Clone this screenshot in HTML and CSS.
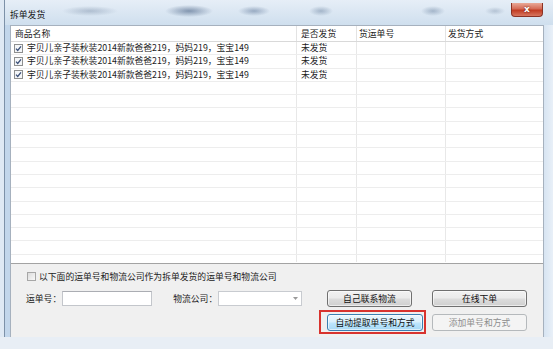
FILE: index.html
```html
<!DOCTYPE html>
<html lang="zh-CN">
<head>
    <meta charset="UTF-8">
    <meta name="viewport" content="width=device-width, initial-scale=1.0">
    <title>拆单发货</title>
    <link rel="stylesheet" href="styles.css">
</head>
<body>

<div class="window">
    <div class="titlebar">
        <span class="title">拆单发货</span>
        <span class="close">x</span>
    </div>

    <div class="frame">
        <div class="client">
            <div class="grid">
                <div class="row head">
                    <div>商品名称</div><div>是否发货</div><div>货运单号</div><div>发货方式</div>
                </div>
                <div class="rows">
                    <div class="row">
                        <div class="name"><svg class="tick" width="9" height="9" viewBox="0 0 9 9"><rect x="0.5" y="0.5" width="8" height="8" fill="#f4f6f8" stroke="#8e8f8f"/><path d="M2 4.6 L3.7 6.4 L7 2.3" fill="none" stroke="#3a4f78" stroke-width="1.3"/></svg>宇贝儿亲子装秋装2014新款爸爸219，妈妈219，宝宝149</div>
                        <div>未发货</div><div></div><div></div>
                    </div>
                    <div class="row">
                        <div class="name"><svg class="tick" width="9" height="9" viewBox="0 0 9 9"><rect x="0.5" y="0.5" width="8" height="8" fill="#f4f6f8" stroke="#8e8f8f"/><path d="M2 4.6 L3.7 6.4 L7 2.3" fill="none" stroke="#3a4f78" stroke-width="1.3"/></svg>宇贝儿亲子装秋装2014新款爸爸219，妈妈219，宝宝149</div>
                        <div>未发货</div><div></div><div></div>
                    </div>
                    <div class="row">
                        <div class="name"><svg class="tick" width="9" height="9" viewBox="0 0 9 9"><rect x="0.5" y="0.5" width="8" height="8" fill="#f4f6f8" stroke="#8e8f8f"/><path d="M2 4.6 L3.7 6.4 L7 2.3" fill="none" stroke="#3a4f78" stroke-width="1.3"/></svg>宇贝儿亲子装秋装2014新款爸爸219，妈妈219，宝宝149</div>
                        <div>未发货</div><div></div><div></div>
                    </div>
                    <!-- empty rows -->
                    <div class="row"><div></div><div></div><div></div><div></div></div>
                    <div class="row"><div></div><div></div><div></div><div></div></div>
                    <div class="row"><div></div><div></div><div></div><div></div></div>
                    <div class="row"><div></div><div></div><div></div><div></div></div>
                    <div class="row"><div></div><div></div><div></div><div></div></div>
                    <div class="row"><div></div><div></div><div></div><div></div></div>
                    <div class="row"><div></div><div></div><div></div><div></div></div>
                    <div class="row"><div></div><div></div><div></div><div></div></div>
                    <div class="row"><div></div><div></div><div></div><div></div></div>
                    <div class="row"><div></div><div></div><div></div><div></div></div>
                    <div class="row"><div></div><div></div><div></div><div></div></div>
                    <div class="row"><div></div><div></div><div></div><div></div></div>
                    <div class="row"><div></div><div></div><div></div><div></div></div>
                    <div class="row"><div></div><div></div><div></div><div></div></div>
                </div>
            </div>

            <div class="panel">
                <label class="opt"><span class="cb"></span>以下面的运单号和物流公司作为拆单发货的运单号和物流公司</label>
                <div class="bottom">
                    <div class="fields">
                        <span class="lbl">运单号：</span>
                        <span class="input"></span>
                        <span class="lbl lbl-company">物流公司：</span>
                        <span class="combo">
                            <svg width="5" height="3" viewBox="0 0 5 3"><path d="M0 0 H5 L2.5 3 Z" fill="#9a9a9a"/></svg>
                        </span>
                    </div>
                    <div class="btns">
                        <button type="button" class="btn btn-own">自己联系物流</button>
                        <button type="button" class="btn">在线下单</button>
                        <span class="mark"><button type="button" class="btn btn-hot">自动提取单号和方式</button></span>
                        <button type="button" class="btn" disabled>添加单号和方式</button>
                    </div>
                </div>
            </div>
        </div>
    </div>

    <div class="frame-foot"></div>
</div>

</body>
</html>
```

FILE: styles.css
```css
body {
    margin: 0;
    font-family: "Noto Sans CJK SC", "Noto Sans", sans-serif;
    font-size: 8.8px;
    line-height: 11px;
    color: #1c1c1c;
    background-color: #e6edf5;
}

.window {
    width: 553px;
    height: 349px;
    display: flex;
    flex-direction: column;
    overflow: hidden;
}

.titlebar {
    height: 25px;
    display: flex;
    justify-content: space-between;
    align-items: flex-start;
    padding: 0 10px 0 10px;
    box-sizing: border-box;
    background:
        radial-gradient(ellipse 28px 5px at 90px 11px, rgba(120, 140, 165, 0.45), transparent),
        radial-gradient(ellipse 24px 6px at 189px 11px, rgba(70, 95, 130, 0.6), transparent),
        radial-gradient(ellipse 16px 5px at 254px 11px, rgba(85, 110, 145, 0.5), transparent),
        radial-gradient(ellipse 12px 5px at 321px 11px, rgba(95, 120, 150, 0.45), transparent),
        radial-gradient(ellipse 12px 5px at 433px 11px, rgba(95, 120, 150, 0.45), transparent),
        radial-gradient(ellipse 10px 4px at 495px 11px, rgba(120, 140, 165, 0.4), transparent),
        linear-gradient(to right, #dfe9f4 0 4px, #7d91a8 4px 5px, transparent 5px),
        linear-gradient(#e6eef7, #cfdfee);
}

.title {
    padding-top: 9px;
    color: #151515;
}

.close {
    margin-top: 3px;
    width: 32px;
    height: 14px;
    box-sizing: border-box;
    border: 1px solid #8b3224;
    border-top: none;
    border-radius: 0 0 4px 4px;
    background: linear-gradient(#e9a898, #d46a55 45%, #c13b22 55%, #d7765f);
    color: #fff;
    font-family: "DejaVu Sans", sans-serif;
    font-weight: bold;
    font-size: 9px;
    line-height: 12px;
    text-align: center;
    text-shadow: 0 0 2px #5a1a10;
}

.frame {
    display: flex;
    padding: 0 9px 0 10px;
    background: linear-gradient(to right, #dfe9f4 0 4px, #7d91a8 4px 5px, #c2d6eb 5px 10px, transparent 10px),
        linear-gradient(to right, #cfdfef 540px, #e9f0f8);
}

.client {
    width: 534px;
    height: 312px;
    box-sizing: border-box;
    border: 1px solid #a6b1be;
    border-bottom: none;
    display: flex;
    flex-direction: column;
    background-color: #f0f0f0;
}

.grid {
    height: 237px;
    background-color: #fff;
    border-bottom: 1px solid #a3a3a3;
    overflow: hidden;
}

.row {
    display: grid;
    grid-template-columns: 286px 60px 89px 97px;
    height: 13.3px;
    box-sizing: border-box;
    border-bottom: 1px solid #ededed;
}

.row > div {
    border-right: 1px solid #e8e8e8;
    padding-left: 4px;
    white-space: nowrap;
    overflow: hidden;
    line-height: 12px;
}

.row > div:nth-child(3),
.row > div:nth-child(4) {
    padding-left: 2px;
}

.row > div:last-child {
    border-right: none;
}

.head {
    height: 16px;
    border-bottom: 1px solid #d9d9d9;
}

.head > div {
    line-height: 15px;
    border-right-color: #e3e3e3;
}

.rows {
    height: 220px;
    overflow: hidden;
}

.name {
    display: flex;
    align-items: center;
    padding-left: 3px !important;
}

.tick {
    margin-right: 4px;
    flex-shrink: 0;
}

.panel {
    flex: 1;
    padding: 7px 16px 0 15px;
}

.opt {
    display: flex;
    align-items: center;
    margin-left: 1px;
    height: 11px;
    color: #222;
}

.cb {
    width: 9px;
    height: 9px;
    box-sizing: border-box;
    border: 1px solid #a7a7a7;
    background: linear-gradient(135deg, #dcdcdc, #f8f8f8);
    margin-right: 3px;
}

.bottom {
    display: flex;
    justify-content: space-between;
    align-items: flex-start;
    margin-top: 8px;
}

.fields {
    display: flex;
    align-items: center;
    height: 17px;
}

.lbl {
    color: #222;
}

.input {
    width: 90px;
    height: 15px;
    margin-left: 1px;
    box-sizing: border-box;
    border: 1px solid #c3c6cb;
    border-top-color: #abadb3;
    background-color: #fff;
}

.lbl-company {
    margin-left: 21px;
}

.combo {
    width: 84px;
    height: 15px;
    margin-left: 1px;
    box-sizing: border-box;
    border: 1px solid #c8cbd0;
    background-color: #fff;
    display: flex;
    align-items: center;
    justify-content: flex-end;
    padding-right: 3px;
}

.btns {
    display: grid;
    grid-template-columns: 96px 95px;
    column-gap: 9px;
    row-gap: 7px;
}

.btn {
    height: 17px;
    padding: 0;
    font-family: inherit;
    font-size: 8.8px;
    line-height: 15px;
    color: #111;
    border: 1px solid #707070;
    border-radius: 3px;
    background: linear-gradient(#f2f2f2, #ebebeb 48%, #dddddd 52%, #cfcfcf);
    box-shadow: inset 0 0 0 1px rgba(255, 255, 255, 0.6);
}

.btn-own {
    width: 85px;
}

.btn:disabled {
    color: #8d8d8d;
    border-color: #b5b9bc;
    background: #f4f4f4;
    box-shadow: none;
}

.mark {
    display: block;
    margin: -4px -3px -3px -8px;
    padding: 2px 1px 1px 6px;
    border: 2px solid #d8332e;
}

.btn-hot {
    width: 96px;
    border-color: #3c7fb1;
    background: linear-gradient(#eaf6fd, #d9f0fc 48%, #bee6fd 52%, #a7d9f5);
}

.frame-foot {
    flex: 1;
    background-color: #e8eef5;
}
```
